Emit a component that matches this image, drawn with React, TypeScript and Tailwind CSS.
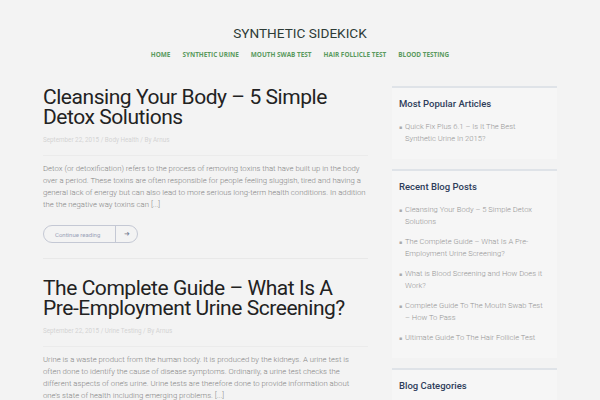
const nav = ["Home", "Synthetic Urine", "Mouth Swab Test", "Hair Follicle Test", "Blood Testing"];

const posts = [
  {
    title: "Cleansing Your Body – 5 Simple Detox Solutions",
    meta: "September 22, 2015 / Body Health / By Arnus",
    excerpt:
      "Detox (or detoxification) refers to the process of removing toxins that have built up in the body over a period. These toxins are often responsible for people feeling sluggish, tired and having a general lack of energy but can also lead to more serious long-term health conditions. In addition the the negative way toxins can [...]",
  },
  {
    title: "The Complete Guide – What Is A Pre-Employment Urine Screening?",
    meta: "September 22, 2015 / Urine Testing / By Arnus",
    excerpt:
      "Urine is a waste product from the human body. It is produced by the kidneys. A urine test is often done to identify the cause of disease symptoms. Ordinarily, a urine test checks the different aspects of one’s urine. Urine tests are therefore done to provide information about one’s state of health including emerging problems. [...]",
  },
];

const widgets = [
  { title: "Most Popular Articles", items: ["Quick Fix Plus 6.1 – Is It The Best Synthetic Urine In 2015?"] },
  {
    title: "Recent Blog Posts",
    items: [
      "Cleansing Your Body – 5 Simple Detox Solutions",
      "The Complete Guide – What Is A Pre-Employment Urine Screening?",
      "What is Blood Screening and How Does it Work?",
      "Complete Guide To The Mouth Swab Test – How To Pass",
      "Ultimate Guide To The Hair Follicle Test",
    ],
  },
  { title: "Blog Categories", items: [] },
];

const App = () => {
  return (
    <div className="w-[600px] h-[400px] overflow-hidden bg-[#f3f3f3] font-['Roboto',sans-serif]">
      <header className="pt-[25px] text-center">
        <h1 className="text-[13.6px] leading-[16px] text-[#2d3b36]">SYNTHETIC SIDEKICK</h1>
        <nav className="mt-[9px] flex justify-center gap-[12px] font-['Open_Sans',sans-serif] text-[6.4px] leading-[10px] font-bold uppercase text-[#5a9a5e]">
          {nav.map((n) => (
            <span key={n}>{n}</span>
          ))}
        </nav>
      </header>

      <div className="mt-[26px] flex gap-[24px] pl-[43px]">
        <main className="w-[325px] shrink-0 pt-[1px]">
          {posts.map((p, i) => (
            <article key={p.title} className={i > 0 ? "mt-[15px] border-t border-[#e8e8e8] pt-[19px]" : ""}>
              <h2 className="text-[21px] leading-[20px] text-[#222] font-normal tracking-[-0.45px]">{p.title}</h2>
              <div className="mt-[9px] pb-[11px] border-b border-[#ebebeb] text-[6.3px] leading-[8px] text-[#d4d4d4]">{p.meta}</div>
              <p className="mt-[7px] text-[7.75px] leading-[12px] font-light text-[#858585]">{p.excerpt}</p>
              {i === 0 && (
                <div className="mt-[14px] flex h-[18px] w-[95px] items-center rounded-full border border-[#c4c8d4] text-[6px] text-[#9aa2b8]">
                  <span className="flex-1 pl-[11px]">Continue reading</span>
                  <span className="flex h-full w-[22px] items-center justify-center border-l border-[#c4c8d4] text-[7px] text-[#7a8094]">➜</span>
                </div>
              )}
            </article>
          ))}
        </main>

        <aside className="w-[165px] shrink-0 flex flex-col gap-[10px]">
          {widgets.map((w) => (
            <section key={w.title} className="border-t-2 border-[#dfe3e8] bg-[#f6f6f6] px-[7px] pt-[10px] pb-[14px]">
              <h3 className="text-[9.5px] leading-[12px] font-medium text-[#2e3d5a]">{w.title}</h3>
              <ul className="mt-[11px] flex flex-col gap-[8px] pr-[4px]">
                {w.items.map((it) => (
                  <li key={it} className="flex gap-[3px] text-[7.6px] leading-[12px] font-light text-[#959595]">
                    <span className="shrink-0 text-[5px] text-[#aaa]">■</span>
                    <span>{it}</span>
                  </li>
                ))}
              </ul>
            </section>
          ))}
        </aside>
      </div>
    </div>
  );
};

export default App;
